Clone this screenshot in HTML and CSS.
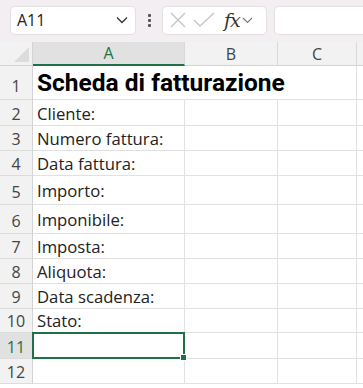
FILE: index.html
```html
<!DOCTYPE html>
<html lang="it">
<head>
    <meta charset="UTF-8">
    <title>Scheda di fatturazione</title>
    <link rel="stylesheet" href="styles.css">
</head>
<body>

<div class="toolbar">
    <div class="name-box">
        <span>A11</span>
        <svg class="chev" width="12" height="8" viewBox="0 0 12 8"><path d="M1 1.5 L6 6.5 L11 1.5" fill="none" stroke="#333" stroke-width="1.3"/></svg>
    </div>
    <div class="dots"><i></i><i></i><i></i></div>
    <div class="fx-box">
        <svg width="18" height="18" viewBox="0 0 18 18"><path d="M2 2 L16 16 M16 2 L2 16" stroke="#c4c4c4" stroke-width="1.3"/></svg>
        <svg width="22" height="18" viewBox="0 0 22 18"><path d="M1 9 L7 15 L21 2" fill="none" stroke="#c4c4c4" stroke-width="1.3"/></svg>
        <span class="fx">fx</span>
        <svg width="11" height="7" viewBox="0 0 11 7"><path d="M1 1 L5.5 5.5 L10 1" fill="none" stroke="#777" stroke-width="1.1"/></svg>
    </div>
    <div class="formula"></div>
</div>

<div class="sheet">
    <div class="corner"><span class="tri"></span></div>
    <div class="col-head active">A</div>
    <div class="col-head">B</div>
    <div class="col-head">C</div>
    <div class="col-head edge"></div>

    <div class="row-head r1">1</div>
    <div class="cell title spill"><span>Scheda di fatturazione</span></div>
    <div class="cell spill"></div><div class="cell"></div><div class="cell edge"></div>

    <div class="row-head">2</div>
    <div class="cell">Cliente:</div>
    <div class="cell"></div><div class="cell"></div><div class="cell edge"></div>

    <div class="row-head">3</div>
    <div class="cell">Numero fattura:</div>
    <div class="cell"></div><div class="cell"></div><div class="cell edge"></div>

    <div class="row-head">4</div>
    <div class="cell">Data fattura:</div>
    <div class="cell"></div><div class="cell"></div><div class="cell edge"></div>

    <div class="row-head tall">5</div>
    <div class="cell tall">Importo:</div>
    <div class="cell"></div><div class="cell"></div><div class="cell edge"></div>

    <div class="row-head tall">6</div>
    <div class="cell tall">Imponibile:</div>
    <div class="cell"></div><div class="cell"></div><div class="cell edge"></div>

    <div class="row-head">7</div>
    <div class="cell">Imposta:</div>
    <div class="cell"></div><div class="cell"></div><div class="cell edge"></div>

    <div class="row-head">8</div>
    <div class="cell">Aliquota:</div>
    <div class="cell"></div><div class="cell"></div><div class="cell edge"></div>

    <div class="row-head">9</div>
    <div class="cell">Data scadenza:</div>
    <div class="cell"></div><div class="cell"></div><div class="cell edge"></div>

    <div class="row-head">10</div>
    <div class="cell">Stato:</div>
    <div class="cell"></div><div class="cell"></div><div class="cell edge"></div>

    <div class="row-head active">11</div>
    <div class="cell selected"><span class="handle"></span></div>
    <div class="cell"></div><div class="cell"></div><div class="cell edge"></div>

    <div class="row-head">12</div>
    <div class="cell"></div>
    <div class="cell"></div><div class="cell"></div><div class="cell edge"></div>
</div>

</body>
</html>
```

FILE: styles.css
```css
body {
    margin: 0;
    font-family: 'Open Sans', 'Noto Sans', sans-serif;
    background: #fff;
    color: #222;
    overflow: hidden;
}

.toolbar {
    height: 42px;
    background: #f3eef1;
    display: flex;
    align-items: center;
    padding-left: 10px;
    box-sizing: border-box;
}

.name-box {
    width: 126px;
    height: 29px;
    background: #fff;
    border: 1px solid #e4e0e2;
    border-radius: 5px;
    box-sizing: border-box;
    display: flex;
    align-items: center;
    justify-content: space-between;
    padding: 0 7px 0 6px;
    font-size: 16px;
    color: #222;
    margin-top: -2px;
}

.dots {
    width: 26px;
    display: flex;
    flex-direction: column;
    align-items: center;
    gap: 2px;
    margin-top: -2px;
}

.dots i {
    width: 3px;
    height: 3px;
    background: #555;
    border-radius: 1px;
}

.fx-box {
    width: 105px;
    height: 29px;
    background: #fff;
    border: 1px solid #e4e0e2;
    border-radius: 5px;
    box-sizing: border-box;
    display: flex;
    align-items: center;
    gap: 6px;
    padding-left: 6px;
    margin-top: -2px;
}

.fx {
    font-family: 'DejaVu Serif', 'Liberation Serif', serif;
    font-style: italic;
    font-size: 19px;
    color: #333;
    margin-left: 3px;
    margin-right: -4px;
    letter-spacing: -1px;
}

.formula {
    flex: 1;
    height: 29px;
    background: #fff;
    border: 1px solid #e4e0e2;
    border-right: none;
    border-radius: 5px 0 0 5px;
    box-sizing: border-box;
    margin-left: 7px;
    margin-top: -2px;
}

.sheet {
    display: grid;
    grid-template-columns: 33px 152px 93px 79px 6px;
    grid-template-rows: 24px 34px 26px 25px 25px 29px 29px 25px 25px 25px 24px 26px 25px;
}

.corner {
    background: #f2f2f2;
    border-right: 1px solid #d4d4d4;
    border-bottom: 1px solid #d4d4d4;
    position: relative;
}

.tri {
    position: absolute;
    right: 3px;
    bottom: 3px;
    width: 0;
    height: 0;
    border-left: 15px solid transparent;
    border-bottom: 15px solid #dcdcdc;
}

.col-head {
    background: #f2f2f2;
    border-right: 1px solid #d8d8d8;
    border-bottom: 1px solid #d4d4d4;
    display: flex;
    align-items: center;
    justify-content: center;
    font-size: 16px;
    color: #444;
}

.col-head.active {
    background: #e1e1e1;
    color: #1e7145;
    border-bottom: 2px solid #1e7145;
}

.col-head.edge,
.cell.edge {
    border-right: none;
}

.row-head {
    background: #f2f2f2;
    border-right: 1px solid #d4d4d4;
    border-bottom: 1px solid #dcdcdc;
    display: flex;
    align-items: flex-end;
    justify-content: center;
    padding-bottom: 0;
    box-sizing: border-box;
    font-size: 16px;
    line-height: 22px;
    color: #444;
}

.row-head.r1 {
    padding-bottom: 2px;
}

.row-head.tall {
    padding-bottom: 1px;
}

.row-head.active {
    background: #e1e1e1;
    color: #1e7145;
}

.cell {
    border-right: 1px solid #e1e1e1;
    border-bottom: 1px solid #e1e1e1;
    display: flex;
    align-items: flex-end;
    padding: 0 0 0 4px;
    box-sizing: border-box;
    font-size: 16.7px;
    line-height: 23px;
    color: #222;
    white-space: nowrap;
    min-width: 0;
}

.cell.spill {
    border-right-color: transparent;
}

.cell.tall {
    padding-bottom: 2px;
}

.cell.title {
    font-family: Roboto, 'Liberation Sans', sans-serif;
    font-weight: bold;
    font-size: 24.5px;
    line-height: 30px;
    color: #000;
    padding-bottom: 1px;
    position: relative;
    z-index: 1;
}

.cell.title span {
    overflow: visible;
    flex: none;
}

.cell.selected {
    border: 2px solid #1e7145;
    margin: -1px 0 0 -1px;
    position: relative;
}

.handle {
    position: absolute;
    right: -4px;
    bottom: -4px;
    width: 5px;
    height: 5px;
    background: #1e7145;
    border: 1px solid #fff;
}
```
